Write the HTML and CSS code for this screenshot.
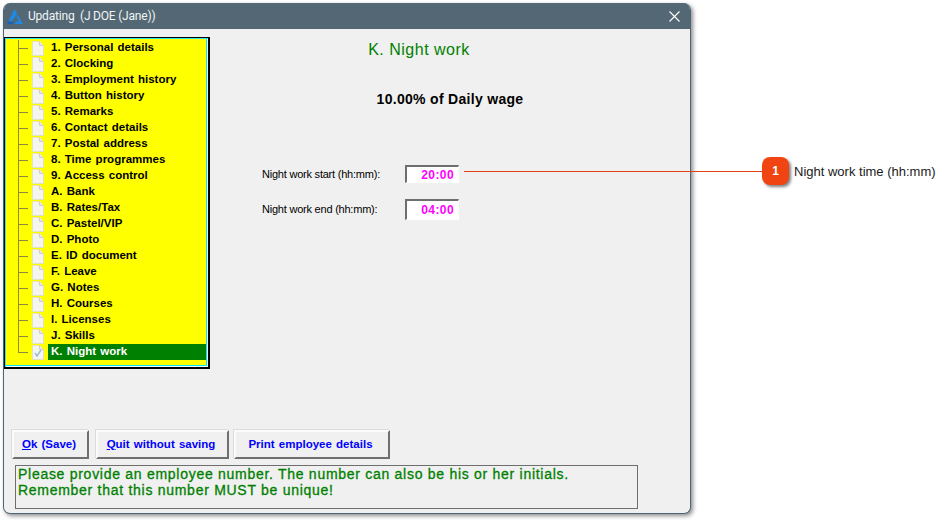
FILE: index.html
```html
<!DOCTYPE html>
<html lang="en">
<head>
<meta charset="utf-8">
<title>Updating</title>
<link rel="stylesheet" href="styles.css">
</head>
<body>
<svg class="defs" width="0" height="0" aria-hidden="true">
  <symbol id="page" viewBox="0 0 13 15">
    <path d="M.5 .5H7.5L11.5 4.5V14.5H.5Z" fill="#f5f5f0" stroke="#e2e2c0"/>
    <path d="M7.5 .5V4.5H11.5" fill="#e8e8e0" stroke="#d0d0c0"/>
  </symbol>
</svg>
<div class="stage">
  <div class="window">
    <div class="titlebar">
      <svg class="logo" viewBox="0 0 16 15" width="16" height="15"><path d="M7.5 0 10.2 4.8 5.5 12H1.6Z" fill="#1e88e5"/><path d="M10.8 5.8 16 15H7.5L9 12.6H12.2L9.5 8Z" fill="#1e88e5"/><path d="M0 15 1.3 12.8H7.2L5.8 15Z" fill="#1565c0"/></svg>
      <span class="title">Updating  (J DOE (Jane))</span>
      <svg class="close" viewBox="0 0 11 11" width="11" height="11"><path d="M.5 .5 10.5 10.5M10.5 .5 .5 10.5" stroke="#fff" stroke-width="1.1" fill="none"/></svg>
    </div>
    <div class="content">
      <div class="main">
        <div class="tree">
          <ul class="tree-list">
            <li class="node"><svg class="doc"><use href="#page"/></svg><span class="label">1. Personal details</span></li>
            <li class="node"><svg class="doc"><use href="#page"/></svg><span class="label">2. Clocking</span></li>
            <li class="node"><svg class="doc"><use href="#page"/></svg><span class="label">3. Employment history</span></li>
            <li class="node"><svg class="doc"><use href="#page"/></svg><span class="label">4. Button history</span></li>
            <li class="node"><svg class="doc"><use href="#page"/></svg><span class="label">5. Remarks</span></li>
            <li class="node"><svg class="doc"><use href="#page"/></svg><span class="label">6. Contact details</span></li>
            <li class="node"><svg class="doc"><use href="#page"/></svg><span class="label">7. Postal address</span></li>
            <li class="node"><svg class="doc"><use href="#page"/></svg><span class="label">8. Time programmes</span></li>
            <li class="node"><svg class="doc"><use href="#page"/></svg><span class="label">9. Access control</span></li>
            <li class="node"><svg class="doc"><use href="#page"/></svg><span class="label">A. Bank</span></li>
            <li class="node"><svg class="doc"><use href="#page"/></svg><span class="label">B. Rates/Tax</span></li>
            <li class="node"><svg class="doc"><use href="#page"/></svg><span class="label">C. Pastel/VIP</span></li>
            <li class="node"><svg class="doc"><use href="#page"/></svg><span class="label">D. Photo</span></li>
            <li class="node"><svg class="doc"><use href="#page"/></svg><span class="label">E. ID document</span></li>
            <li class="node"><svg class="doc"><use href="#page"/></svg><span class="label">F. Leave</span></li>
            <li class="node"><svg class="doc"><use href="#page"/></svg><span class="label">G. Notes</span></li>
            <li class="node"><svg class="doc"><use href="#page"/></svg><span class="label">H. Courses</span></li>
            <li class="node"><svg class="doc"><use href="#page"/></svg><span class="label">I. Licenses</span></li>
            <li class="node"><svg class="doc"><use href="#page"/></svg><span class="label">J. Skills</span></li>
            <li class="node last">
              <svg class="doc" viewBox="0 0 13 15"><use href="#page" width="13" height="15"/><path d="M3 8 5 11 9 5" fill="none" stroke="#9db8dc" stroke-width="1.4"/></svg>
              <span class="label selected">K. Night work</span>
            </li>
          </ul>
        </div>
        <div class="panel">
          <h1 class="heading">K. Night work</h1>
          <p class="rate">10.00% of Daily wage</p>
          <div class="fields">
            <div class="field"><span class="field-label">Night work start (hh:mm):</span><span class="time">20:00</span></div>
            <div class="field field-tall"><span class="field-label">Night work end (hh:mm):</span><span class="time">04:00</span></div>
          </div>
        </div>
      </div>
      <div class="actions">
        <button class="btn btn-ok" type="button"><u>O</u>k (Save)</button>
        <button class="btn btn-quit" type="button"><u>Q</u>uit without saving</button>
        <button class="btn btn-print" type="button">Print employee details</button>
      </div>
      <div class="message">Please provide an employee number. The number can also be his or her initials.<br>Remember that this number MUST be unique!</div>
    </div>
  </div>
  <div class="callout-line"></div>
  <div class="callout">
    <span class="badge">1</span>
    <span class="callout-text">Night work time (hh:mm)</span>
  </div>
</div>
</body>
</html>
```

FILE: styles.css
```css
* { box-sizing: border-box; }
html, body { margin: 0; padding: 0; background: #fff; }
body { width: 952px; height: 521px; overflow: hidden; font-family: "Liberation Sans", Arial, sans-serif; }
.defs { position: absolute; }
.stage { position: relative; width: 952px; height: 521px; padding: 3px 0 0 3px; }

.window {
  width: 688px; height: 511px;
  display: flex; flex-direction: column;
  background: #f0f0f0;
  border: 1px solid #4f6573; border-top: 0;
  border-radius: 7px;
  box-shadow: 2px 2px 4px rgba(0,0,0,.45);
  overflow: hidden;
}
.titlebar {
  height: 26px; flex: none;
  display: flex; align-items: center;
  background: #536874; color: #fff;
  padding: 0 10px 0 3px;
}
.logo { flex: none; margin-right: 5px; }
.title { font-family: Roboto, "Liberation Sans", sans-serif; font-size: 12px; letter-spacing: -.2px; white-space: pre; flex: 1; color: #f2f5f6; }
.close { flex: none; }

.content { flex: 1; display: flex; flex-direction: column; padding: 8px 0 0 0; min-height: 0; }
.main { flex: 1; display: flex; min-height: 0; }

.tree {
  width: 206px; height: 332px; flex: none;
  background: #ffff00;
  border: 2px solid #000;
  border-top-width: 1px; border-left-width: 1px;
  box-shadow: inset 1px 1px 0 #30e4e4, inset -1px -1px 0 #f0ffff, inset -2px -2px 0 #00e8f8;
  padding: 2px 2px 0 3px;
}
.tree-list { list-style: none; margin: 0; padding: 0 0 0 10px; }
.node {
  position: relative;
  height: 16px;
  display: flex; align-items: center;
  padding-left: 14px;
}
.node::before {
  content: ""; position: absolute; left: 0; top: 0; width: 1px; height: 100%;
  background: #8a8a3c;
}
.node::after {
  content: ""; position: absolute; left: 0; top: 8px; width: 10px; height: 1px;
  background: #8a8a3c;
}
.node.last::before { height: 9px; }
.doc { width: 13px; height: 15px; flex: none; margin-right: 3px; }
.label {
  flex: 1; height: 16px; line-height: 15px; padding-left: 3px;
  font-size: 11.5px; font-weight: bold; word-spacing: 1px; color: #000; white-space: nowrap;
}
.selected { background: #008000; color: #fff; }

.panel { flex: 1; position: relative; }
.heading {
  margin: 4px 0 0; width: 418px;
  font-size: 16px; font-weight: normal; line-height: 18px; letter-spacing: .5px;
  text-align: center; color: #008000;
}
.rate {
  margin: 31px 0 0; width: 480px;
  font-size: 14px; font-weight: bold; line-height: 18px; letter-spacing: .3px; text-align: center; color: #000;
}
.fields { margin: 57px 0 0 52px; display: flex; flex-direction: column; gap: 16px; }
.field { display: flex; align-items: center; height: 18px; }
.field-tall { height: 21px; }
.field-label { width: 143px; font-size: 11px; letter-spacing: -.22px; color: #000; white-space: nowrap; }
.field-tall .field-label { padding-bottom: 2px; }
.time {
  width: 54px; height: 100%;
  display: flex; align-items: center; justify-content: flex-end;
  background: #fff;
  border: 2px solid; border-color: #6e6e6e #fff #fff #6e6e6e;
  border-bottom-width: 1px; border-right-width: 1px;
  font-size: 12px; font-weight: bold; letter-spacing: .4px;
  padding-right: 4px; color: #ff00ff;
}

.actions { display: flex; gap: 5px; padding: 1px 0 0 8px; }
.btn {
  height: 29px; padding: 0 3px 1px 0;
  background: #f0f0f0;
  border: 2px solid; border-color: #fbfbfb #6f6f6f #6f6f6f #fbfbfb;
  box-shadow: -1px -1px 0 #dcdcdc;
  font-family: "Liberation Sans", Arial, sans-serif;
  font-size: 11.5px; font-weight: bold; word-spacing: 1px; color: #0000ff;
}
.btn-ok { width: 77px; }
.btn-quit { width: 133px; margin-left: 2px; }
.btn-print { width: 156px; }

.message {
  width: 623px; height: 44px; margin: 6px 0 4px 11px;
  border: 1px solid #6e6e6e;
  padding: 0 0 0 2px;
  font-size: 14px; line-height: 16px; letter-spacing: .72px; color: #008000; white-space: nowrap;
  -webkit-text-stroke: .3px #008000;
}

.callout-line { position: absolute; left: 464px; top: 171px; width: 300px; height: 1px; background: #e0431a; }
.callout { position: absolute; left: 762px; top: 157px; display: flex; align-items: center; gap: 5px; }
.badge {
  width: 27px; height: 28px; border-radius: 8px;
  background: #f04512; color: #fff;
  font-size: 12px; font-weight: bold; line-height: 28px; text-align: center;
  box-shadow: 2px 2px 3px rgba(0,0,0,.5);
}
.callout-text { font-size: 13px; color: #1a1a1a; white-space: nowrap; }
```
